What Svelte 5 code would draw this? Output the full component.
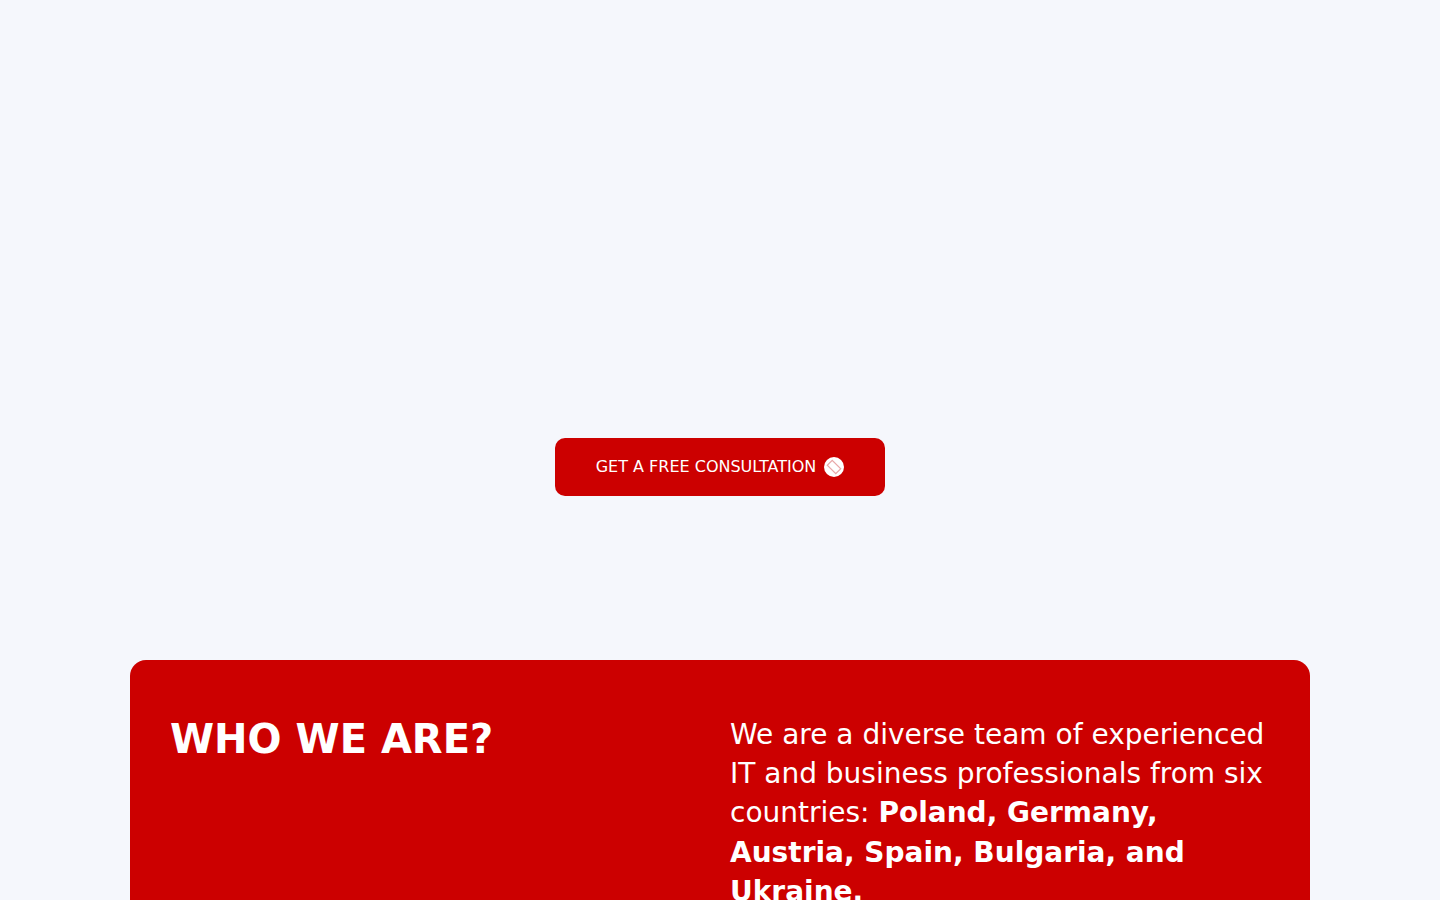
<script>
  let intro = 'We are a diverse team of experienced IT and business professionals from six countries: ';
  let countries = 'Poland, Germany, Austria, Spain, Bulgaria, and Ukraine.';
</script>

<main class="page">
  <section class="hero">
    <button type="button" class="cta">
      <span class="cta-label">GET A FREE CONSULTATION</span>
      <svg class="cta-icon" viewBox="0 0 20 20" width="20" height="20" aria-hidden="true">
        <circle cx="10" cy="10" r="10" fill="#fff" />
        <g transform="rotate(45 10 10)">
          <rect x="4" y="6.5" width="12" height="7" fill="#fff" stroke="#e9a9a9" stroke-width="1.2" />
        </g>
      </svg>
    </button>
  </section>

  <section class="about">
    <h2>WHO WE ARE?</h2>
    <p>{intro}<strong>{countries}</strong></p>
  </section>
</main>

<style>
  :global(body) {
    background: #f5f7fc;
    font-family: "DejaVu Sans", sans-serif;
  }

  .page {
    display: flex;
    flex-direction: column;
    align-items: center;
  }

  .hero {
    height: 660px;
    padding-top: 438px;
    box-sizing: border-box;
  }

  .cta {
    display: flex;
    align-items: center;
    justify-content: center;
    gap: 8px;
    width: 330px;
    height: 58px;
    background: #cc0000;
    color: #fff;
    border: none;
    border-radius: 10px;
    font-family: inherit;
    font-size: 16px;
    cursor: pointer;
  }

  .cta-label {
    margin-bottom: 2px;
  }

  .cta-icon {
    flex: none;
  }

  .about {
    display: grid;
    grid-template-columns: 1fr 1fr;
    gap: 20px;
    width: 1180px;
    box-sizing: border-box;
    padding: 55px 40px 40px;
    background: #cc0000;
    color: #fff;
    border-radius: 16px;
  }

  h2 {
    margin: 0;
    font-size: 40px;
    font-weight: 700;
    line-height: 1.2;
  }

  p {
    margin: 0;
    font-size: 28px;
    line-height: 1.4;
  }
</style>
